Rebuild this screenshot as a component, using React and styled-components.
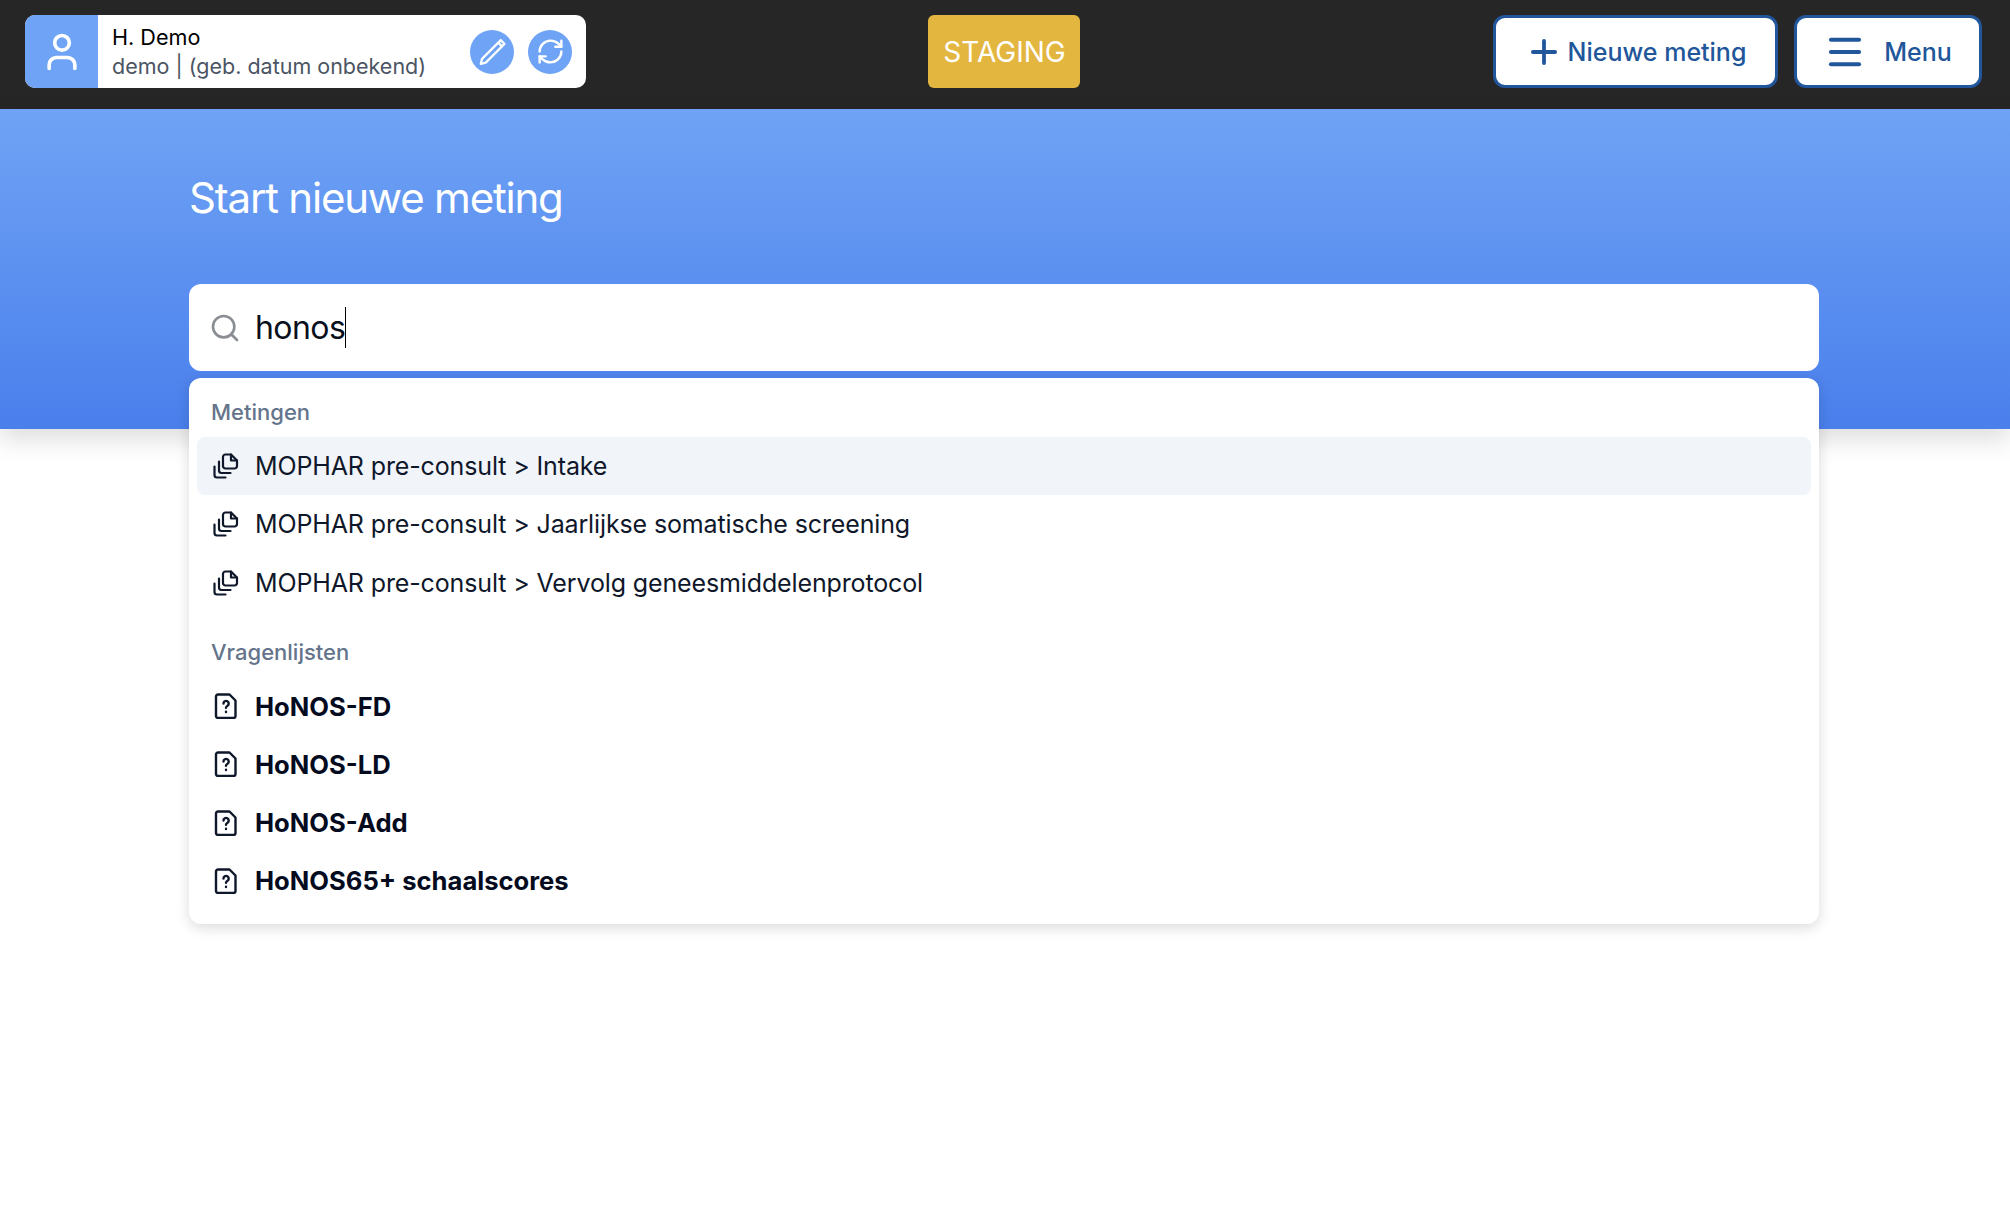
import React from 'react';
import styled, { createGlobalStyle } from 'styled-components';
import { User, RefreshCw, Plus, Menu, Search } from 'lucide-react';

const GlobalStyle = createGlobalStyle`
  html, body {
    margin: 0;
    padding: 0;
    background: #fff;
    font-family: Inter, "Liberation Sans", sans-serif;
    color: #0f172a;
  }
  * { box-sizing: border-box; }
`;

const Page = styled.div`
  min-height: 100vh;
  overflow: hidden;
`;

const TopBar = styled.header`
  height: 109px;
  background: #262626;
  padding: 15px 28px 21px 25px;
  display: grid;
  grid-template-columns: 1fr auto 1fr;
  align-items: stretch;
`;

const PatientCard = styled.div`
  width: 561px;
  background: #fff;
  border-radius: 10px;
  overflow: hidden;
  display: flex;
  align-items: stretch;
`;

const Avatar = styled.div`
  width: 73px;
  background: #6fa3f5;
  color: #fff;
  display: flex;
  align-items: center;
  justify-content: center;
`;

const PatientInfo = styled.div`
  flex: 1;
  padding: 8px 0 0 14px;
`;

const PatientName = styled.div`
  font-size: 21.6px;
  line-height: 28px;
  color: #000;
`;

const PatientMeta = styled.div`
  font-size: 21.5px;
  line-height: 30px;
  color: #4b5563;
`;

const CardActions = styled.div`
  display: flex;
  align-items: center;
  gap: 14px;
  padding-right: 14px;
`;

const RoundButton = styled.div`
  width: 44px;
  height: 44px;
  border-radius: 50%;
  background: #6fa3f5;
  color: #fff;
  display: flex;
  align-items: center;
  justify-content: center;
`;

const StagingBadge = styled.div`
  width: 152px;
  background: #e3b63f;
  color: #fff;
  border-radius: 6px;
  font-size: 28px;
  padding-left: 2px;
  display: flex;
  align-items: center;
  justify-content: center;
`;

const TopActions = styled.div`
  display: flex;
  justify-content: flex-end;
  gap: 16px;
`;

const OutlineButton = styled.div`
  width: ${(p) => p.$width}px;
  background: #fff;
  border: 3px solid #21569b;
  border-radius: 12px;
  color: #21569b;
  font-size: 25px;
  font-weight: 500;
  display: flex;
  align-items: center;
  justify-content: center;
  gap: ${(p) => p.$gap}px;
`;

const Hero = styled.section`
  height: 320px;
  background: linear-gradient(180deg, #6fa3f5 0%, #4a7fec 100%);
  box-shadow: 0 10px 25px rgba(0, 0, 0, 0.14);
  padding: 0 191px 0 189px;
`;

const HeroTitle = styled.h1`
  margin: 0;
  padding-top: 62px;
  height: 175px;
  font-size: 42px;
  line-height: 54px;
  font-weight: 400;
  letter-spacing: -1.2px;
  color: #fff;
`;

const SearchArea = styled.div`
  position: relative;
`;

const SearchBox = styled.div`
  height: 87px;
  background: #fff;
  border-radius: 12px;
  display: flex;
  align-items: center;
  padding-left: 20px;
  gap: 14px;
  color: #8a8d93;
`;

const SearchText = styled.div`
  font-size: 32px;
  line-height: 40px;
  padding-top: 1px;
  color: #0a0f1c;
  border-right: 1px solid #000;
  letter-spacing: -0.55px;
`;

const Dropdown = styled.div`
  position: absolute;
  top: 94px;
  left: 0;
  right: 0;
  height: 546px;
  background: #fff;
  border-radius: 12px;
  box-shadow: 0 4px 14px rgba(0, 0, 0, 0.14);
  padding: 19px 8px 0;
`;

const GroupLabel = styled.div`
  font-size: 22px;
  line-height: 30px;
  font-weight: 500;
  color: #64748b;
  padding-left: 14px;
  margin-top: ${(p) => p.$top || 0}px;
  margin-bottom: 10px;
`;

const Option = styled.div`
  height: 58.3px;
  border-radius: 8px;
  background: ${(p) => (p.$active ? '#f1f4f9' : 'transparent')};
  display: flex;
  align-items: center;
  gap: 16px;
  padding-left: 16px;
  font-size: ${(p) => (p.$bold ? 25.6 : 25)}px;
  letter-spacing: ${(p) => (p.$bold ? 0 : -0.13)}px;
  font-weight: ${(p) => (p.$bold ? 700 : 400)};
  color: ${(p) => (p.$bold ? '#050b1e' : '#0f172a')};
`;

const OptionIcon = styled.svg`
  width: 26px;
  height: 26px;
  flex: none;
  fill: none;
  stroke: #0f172a;
  stroke-width: ${(p) => p.$weight};
  stroke-linecap: round;
  stroke-linejoin: round;
`;

const PencilIcon = () => (
  <svg width="30" height="30" viewBox="0 0 24 24" fill="none" stroke="currentColor" strokeWidth="1.7" strokeLinejoin="round">
    <path d="M19 2.5l3 3L7 20.5l-4 1 1-4z" />
    <path d="M17 4.5l3 3" />
  </svg>
);

const CopyDocIcon = () => (
  <OptionIcon $weight={2.2} viewBox="0 0 26 26">
    <path d="M12.5 1.5h5.5l6 6v5.5a2.5 2.5 0 0 1-2.5 2.5h-9a2.5 2.5 0 0 1-2.5-2.5v-9a2.5 2.5 0 0 1 2.5-2.5z" />
    <path d="M18 1.5v6h6" />
    <path d="M6 8.5v9a2.5 2.5 0 0 0 2.5 2.5h9" />
    <path d="M1.5 13.5v8.5a2.5 2.5 0 0 0 2.5 2.5h8.5" />
  </OptionIcon>
);

const QuestionDocIcon = () => (
  <OptionIcon $weight={2.4} viewBox="0 0 26 26">
    <path d="M5 1.5h11.5l6 6v15.5a2 2 0 0 1-2 2h-15.5a2 2 0 0 1-2-2v-19.5a2 2 0 0 1 2-2z" />
    <path d="M10.5 10.5a2.6 2.6 0 1 1 4 2.2c-1 .6-1.5 1.1-1.5 2.1" />
    <path d="M13 18.8v.2" />
  </OptionIcon>
);

const measurements = [
  'MOPHAR pre-consult > Intake',
  'MOPHAR pre-consult > Jaarlijkse somatische screening',
  'MOPHAR pre-consult > Vervolg geneesmiddelenprotocol',
];

const questionnaires = ['HoNOS-FD', 'HoNOS-LD', 'HoNOS-Add', 'HoNOS65+ schaalscores'];

export default function App() {
  return (
    <Page>
      <GlobalStyle />
      <TopBar>
        <PatientCard>
          <Avatar>
            <User size={44} strokeWidth={2} />
          </Avatar>
          <PatientInfo>
            <PatientName>H. Demo</PatientName>
            <PatientMeta>demo | (geb. datum onbekend)</PatientMeta>
          </PatientInfo>
          <CardActions>
            <RoundButton>
              <PencilIcon />
            </RoundButton>
            <RoundButton>
              <RefreshCw size={29} strokeWidth={2} />
            </RoundButton>
          </CardActions>
        </PatientCard>
        <StagingBadge>STAGING</StagingBadge>
        <TopActions>
          <OutlineButton $width={285} $gap={5}>
            <Plus size={38} strokeWidth={2.4} />
            Nieuwe meting
          </OutlineButton>
          <OutlineButton $width={188} $gap={18}>
            <Menu size={42} strokeWidth={2.4} />
            Menu
          </OutlineButton>
        </TopActions>
      </TopBar>
      <Hero>
        <HeroTitle>Start nieuwe meting</HeroTitle>
        <SearchArea>
          <SearchBox>
            <Search size={32} strokeWidth={2} />
            <SearchText>honos</SearchText>
          </SearchBox>
          <Dropdown>
            <GroupLabel>Metingen</GroupLabel>
            {measurements.map((label, i) => (
              <Option key={label} $active={i === 0}>
                <CopyDocIcon />
                {label}
              </Option>
            ))}
            <GroupLabel $top={25}>Vragenlijsten</GroupLabel>
            {questionnaires.map((label) => (
              <Option key={label} $bold>
                <QuestionDocIcon />
                {label}
              </Option>
            ))}
          </Dropdown>
        </SearchArea>
      </Hero>
    </Page>
  );
}
